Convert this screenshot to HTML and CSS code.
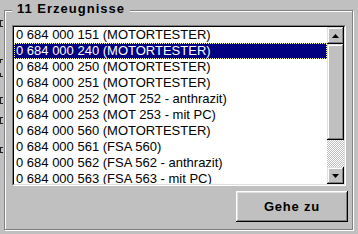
FILE: index.html
```html
<!DOCTYPE html>
<html lang="de">
<head>
    <meta charset="UTF-8">
    <meta name="viewport" content="width=device-width, initial-scale=1.0">
    <title>Erzeugnisse</title>
    <link rel="stylesheet" href="styles.css">
</head>
<body>
    <div class="window">
        <div class="edge">
            <span class="mark m1"></span>
            <span class="mark m2"></span>
            <span class="mark m3"></span>
            <span class="mark m4"></span>
            <span class="mark m5"></span>
            <span class="mark m6"></span>
        </div>

        <div class="group">
            <span class="group-title">11 Erzeugnisse</span>

            <div class="listbox">
                <div class="listbox-inner">
                    <ul class="items">
                        <li>0 684 000 151 (MOTORTESTER)</li>
                        <li class="selected">0 684 000 240 (MOTORTESTER)</li>
                        <li>0 684 000 250 (MOTORTESTER)</li>
                        <li>0 684 000 251 (MOTORTESTER)</li>
                        <li>0 684 000 252 (MOT 252 - anthrazit)</li>
                        <li>0 684 000 253 (MOT 253 - mit PC)</li>
                        <li>0 684 000 560 (MOTORTESTER)</li>
                        <li>0 684 000 561 (FSA 560)</li>
                        <li>0 684 000 562 (FSA 562 - anthrazit)</li>
                        <li>0 684 000 563 (FSA 563 - mit PC)</li>
                    </ul>
                    <div class="scrollbar">
                        <div class="sb-btn">
                            <svg width="7" height="4" viewBox="0 0 7 4"><polygon points="3.5,0 7,4 0,4" fill="#000"/></svg>
                        </div>
                        <div class="sb-thumb"></div>
                        <div class="sb-track"></div>
                        <div class="sb-btn">
                            <svg width="7" height="4" viewBox="0 0 7 4"><polygon points="0,0 7,0 3.5,4" fill="#000"/></svg>
                        </div>
                    </div>
                </div>
            </div>

            <div class="actions">
                <button class="btn">Gehe zu</button>
            </div>
        </div>
    </div>
</body>
</html>
```

FILE: styles.css
```css
* {
    margin: 0;
    padding: 0;
    box-sizing: border-box;
}

body {
    background: #c0c0c0;
    font-family: 'Liberation Sans', Arial, sans-serif;
    font-size: 13px;
    color: #000;
    overflow: hidden;
}

.window {
    display: flex;
    align-items: flex-start;
    width: 358px;
    height: 234px;
}

/* bits of the control behind, cut off at the left edge */
.edge {
    width: 4px;
    display: flex;
    flex-direction: column;
}

.mark {
    display: block;
    width: 3px;
    border-left: 1px solid #202020;
    border-top: 1px solid #202020;
    border-bottom: 1px solid #202020;
}

.m1 { margin-top: 20px; height: 7px; }
.m2 { margin-top: 32px; height: 4px; border-bottom: none; }
.m3 { margin-top: 10px; height: 4px; border-top: none; }
.m4 { margin-top: 20px; height: 7px; }
.m5 { margin-top: 13px; height: 7px; }
.m6 { margin-top: 23px; height: 6px; }

.group {
    position: relative;
    margin-top: 10px;
    width: 349px;
    height: 220px;
    border: 1px solid #808080;
    box-shadow: inset 1px 1px #fff, 1px 1px #fff;
}

.group-title {
    position: absolute;
    top: -10px;
    left: 7px;
    padding: 0 5px;
    background: #c0c0c0;
    font-weight: bold;
    letter-spacing: 1px;
    line-height: 16px;
}

.listbox {
    margin: 14px 0 0 7px;
    width: 334px;
    height: 161px;
    border: 1px solid;
    border-color: #808080 #fff #fff #808080;
}

.listbox-inner {
    display: flex;
    height: 100%;
    border: 1px solid;
    border-color: #000 #dfdfdf #dfdfdf #000;
    background: #fff;
}

.items {
    flex: 1;
    list-style: none;
    overflow: hidden;
}

.items li {
    height: 16px;
    line-height: 16px;
    padding-left: 2px;
    white-space: nowrap;
}

.items li.selected {
    background: #000080;
    color: #fff;
    outline: 1px dotted #ffff90;
    outline-offset: -1px;
}

.scrollbar {
    width: 17px;
    display: flex;
    flex-direction: column;
}

.sb-btn,
.sb-thumb {
    background: #c0c0c0;
    box-shadow: inset -1px -1px #000, inset 1px 1px #dfdfdf,
                inset -2px -2px #808080, inset 2px 2px #fff;
}

.sb-btn {
    height: 17px;
    display: flex;
    align-items: center;
    justify-content: center;
}

.sb-thumb {
    height: 96px;
}

.sb-track {
    flex: 1;
    background: repeating-conic-gradient(#fff 0 25%, #c0c0c0 0 50%) 0 0 / 2px 2px;
}

.actions {
    display: flex;
    justify-content: flex-end;
    margin-top: 5px;
    padding-right: 4px;
}

.btn {
    width: 112px;
    height: 31px;
    background: #c0c0c0;
    border: none;
    font-family: 'Liberation Sans', Arial, sans-serif;
    font-size: 13px;
    font-weight: bold;
    letter-spacing: 0.8px;
    color: #000;
    box-shadow: inset -1px -1px #000, inset 1px 1px #fff,
                inset -2px -2px #808080, inset 2px 2px #dfdfdf;
}
```
